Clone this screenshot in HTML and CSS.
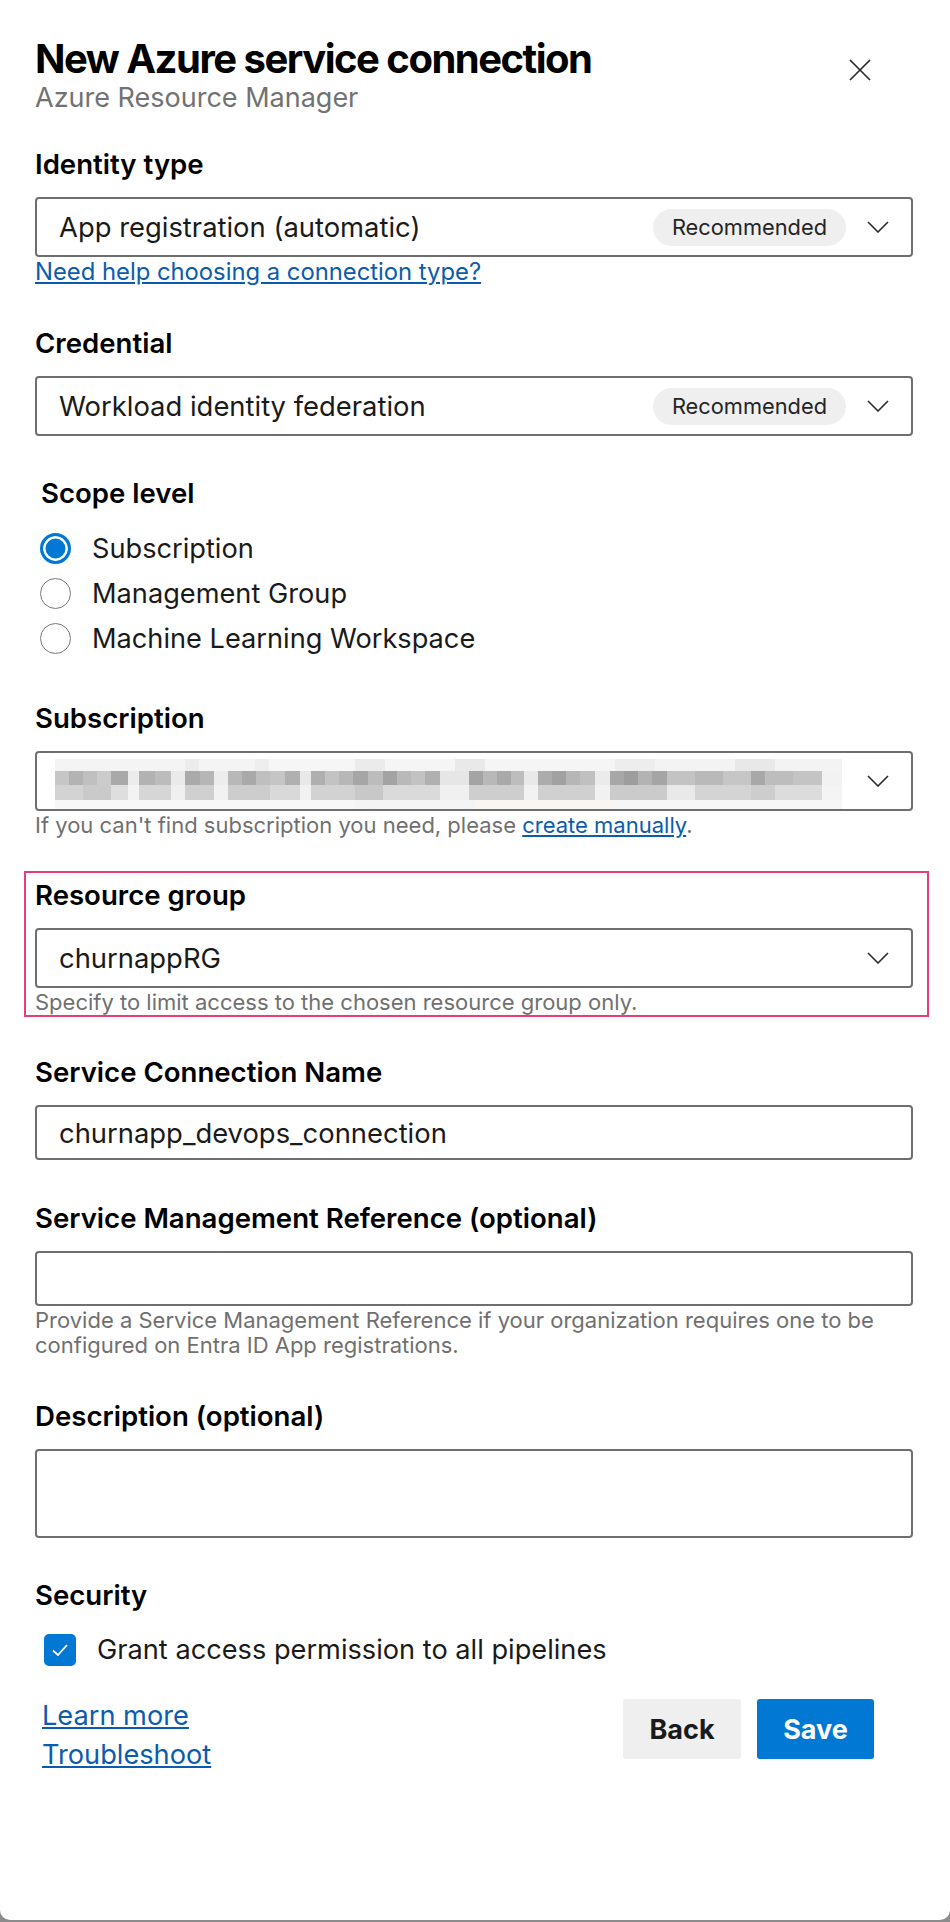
FILE: index.html
```html
<!DOCTYPE html>
<html lang="en">
<head>
<meta charset="utf-8">
<title>New Azure service connection</title>
<link rel="stylesheet" href="styles.css">
</head>
<body>
<div class="panel">
  <header class="header">
    <div class="titles">
      <h1 class="title">New Azure service connection</h1>
      <div class="subtitle">Azure Resource Manager</div>
    </div>
    <button class="close" aria-label="Close">
      <svg width="22" height="22" viewBox="0 0 22 22"><path d="M1 1 L21 21 M21 1 L1 21" stroke="#2b2b2b" stroke-width="1.7" fill="none"/></svg>
    </button>
  </header>

  <section class="section section--first">
    <div class="label">Identity type</div>
    <div class="select">
      <span class="value">App registration (automatic)</span>
      <span class="pill">Recommended</span>
      <svg class="chev" width="22" height="12" viewBox="0 0 22 12"><path d="M1 1 L11 11 L21 1" stroke="#2b2b2b" stroke-width="1.6" fill="none"/></svg>
    </div>
    <a class="help-link" href="#">Need help choosing a connection type?</a>
  </section>

  <section class="section">
    <div class="label">Credential</div>
    <div class="select">
      <span class="value">Workload identity federation</span>
      <span class="pill">Recommended</span>
      <svg class="chev" width="22" height="12" viewBox="0 0 22 12"><path d="M1 1 L11 11 L21 1" stroke="#2b2b2b" stroke-width="1.6" fill="none"/></svg>
    </div>
  </section>

  <section class="section">
    <div class="label label--scope">Scope level</div>
    <div class="radios">
      <div class="radio-row"><span class="radio radio--on"></span><span class="radio-text">Subscription</span></div>
      <div class="radio-row"><span class="radio"></span><span class="radio-text">Management Group</span></div>
      <div class="radio-row"><span class="radio"></span><span class="radio-text">Machine Learning Workspace</span></div>
    </div>
  </section>

  <section class="section">
    <div class="label">Subscription</div>
    <div class="select select--blurred">
      <div class="blur">
        <div class="blur-row blur-row--a"></div>
        <div class="blur-row blur-row--b"></div>
        <div class="blur-row blur-row--c"></div>
        <div class="blur-row blur-row--d"></div>
      </div>
      <svg class="chev" width="22" height="12" viewBox="0 0 22 12"><path d="M1 1 L11 11 L21 1" stroke="#2b2b2b" stroke-width="1.6" fill="none"/></svg>
    </div>
    <div class="helper">If you can't find subscription you need, please <a class="inline-link" href="#">create manually</a>.</div>
  </section>

  <section class="highlight">
    <div class="label">Resource group</div>
    <div class="select">
      <span class="value">churnappRG</span>
      <svg class="chev" width="22" height="12" viewBox="0 0 22 12"><path d="M1 1 L11 11 L21 1" stroke="#2b2b2b" stroke-width="1.6" fill="none"/></svg>
    </div>
    <div class="helper">Specify to limit access to the chosen resource group only.</div>
  </section>

  <section class="section section--after-highlight">
    <div class="label">Service Connection Name</div>
    <div class="input"><span class="value">churnapp_devops_connection</span></div>
  </section>

  <section class="section section--wide">
    <div class="label">Service Management Reference (optional)</div>
    <div class="input"></div>
    <div class="helper helper--multi">Provide a Service Management Reference if your organization requires one to be configured on Entra ID App registrations.</div>
  </section>

  <section class="section section--wide">
    <div class="label">Description (optional)</div>
    <div class="textarea"></div>
  </section>

  <section class="section">
    <div class="label">Security</div>
    <div class="check-row">
      <span class="checkbox"><svg width="20" height="16" viewBox="0 0 20 16"><path d="M3 8.5 L8 13 L17 3" stroke="#fff" stroke-width="1.8" fill="none"/></svg></span>
      <span class="check-text">Grant access permission to all pipelines</span>
    </div>
  </section>

  <footer class="footer">
    <div class="links">
      <a class="foot-link" href="#">Learn more</a>
      <a class="foot-link" href="#">Troubleshoot</a>
    </div>
    <div class="buttons">
      <button class="btn btn--back">Back</button>
      <button class="btn btn--save">Save</button>
    </div>
  </footer>
</div>
</body>
</html>
```

FILE: styles.css
```css
* { box-sizing: border-box; }
html, body { margin: 0; padding: 0; }
body {
  background: #8c8c8c;
  font-family: Inter, "Noto Sans", sans-serif;
  color: #1a1a1a;
}
.panel {
  width: 950px;
  min-height: 1920px;
  background: #fff;
  border-radius: 0 0 10px 10px;
  padding: 35px 37px 0 35px;
}
.header { display: flex; justify-content: space-between; align-items: flex-start; }
.title {
  margin: 0;
  font-size: 40px;
  line-height: 47px;
  font-weight: 700;
  letter-spacing: -1.5px;
  color: #000;
}
.subtitle { font-size: 27px; line-height: 32px; color: #727272; }
.close {
  margin: 13px 31px 0 0;
  width: 44px; height: 44px;
  border: 0; background: none; padding: 0;
  display: flex; align-items: center; justify-content: center;
}
.section { margin-top: 41px; }
.section--first { margin-top: 34px; }
.section--after-highlight { margin-top: 39px; }
.section--wide { margin-top: 42px; }
.label { font-size: 27.6px; line-height: 32px; font-weight: 600; color: #000; }
.label--scope { padding-left: 6px; }
.select, .input, .textarea {
  margin-top: 17px;
  border: 2px solid #6f6f6f;
  border-radius: 4px;
  display: flex;
  align-items: center;
}
.select { height: 60px; padding: 0 22px; }
.input { height: 55px; padding: 0 22px; }
.textarea { height: 89px; display: block; }
.value { font-size: 27.4px; color: #1a1a1a; }
.pill {
  margin-left: auto;
  height: 37px;
  line-height: 37px;
  padding: 0 19px;
  border-radius: 19px;
  background: #efefef;
  font-size: 21.8px;
  color: #242424;
}
.chev { margin-left: auto; flex: none; align-self: center; }
.pill + .chev { margin-left: 21px; }
.help-link {
  display: block;
  margin-top: 1px;
  font-size: 23.8px;
  line-height: 28px;
  color: #0b5cad;
  text-decoration: underline;
  width: max-content;
}
.radios { margin-top: 17px; }
.radio-row { height: 45px; display: flex; align-items: center; padding-left: 5px; gap: 21px; }
.radio {
  width: 31px; height: 31px;
  border-radius: 50%;
  border: 1.6px solid #7a7a7a;
  flex: none;
}
.radio--on {
  border: 3px solid #0078d4;
  background: #0078d4;
  box-shadow: inset 0 0 0 2.5px #fff;
}
.radio-text { font-size: 27.2px; color: #1a1a1a; }
.select--blurred { padding-left: 18px; align-items: stretch; }
.blur { width: 787px; margin-top: 6px; display: flex; flex-direction: column; }
.blur-row { width: 100%; }
.blur-row--a {
  height: 12px;
  background: linear-gradient(90deg, #f4f4f4 0 130px, #ececec 130px 144px, #f4f4f4 144px 200px, #eeeeee 200px 214px, #f6f6f6 214px 300px, #ebebeb 300px 330px, #f5f5f5 330px 400px, #e9e9e9 400px 430px, #f5f5f5 430px 560px, #ededed 560px 600px, #f3f3f3 600px 680px, #e8e8e8 680px 720px, #f3f3f3 720px 787px);
}
.blur-row--b {
  height: 14px;
  background: linear-gradient(90deg,
    #c6c6c6 0 14px, #b3b3b3 14px 28px, #c0c0c0 28px 42px, #cbcbcb 42px 56px, #a9a9a9 56px 73px,
    #ececec 73px 84px,
    #b2b2b2 84px 100px, #bcbcbc 100px 116px,
    #eaeaea 116px 130px,
    #aaaaaa 130px 145px, #b6b6b6 145px 159px,
    #ededed 159px 173px,
    #b8b8b8 173px 187px, #a9a9a9 187px 201px, #bfbfbf 201px 215px, #c5c5c5 215px 230px, #b0b0b0 230px 245px,
    #e8e8e8 245px 256px,
    #afafaf 256px 270px, #c3c3c3 270px 284px, #b7b7b7 284px 298px, #a6a6a6 298px 313px, #bcbcbc 313px 328px, #a3a3a3 328px 342px, #b9b9b9 342px 356px, #c2c2c2 356px 370px, #b0b0b0 370px 385px,
    #e6e6e6 385px 414px,
    #a4a4a4 414px 428px, #b8b8b8 428px 442px, #a9a9a9 442px 456px, #bdbdbd 456px 469px,
    #e9e9e9 469px 483px,
    #acacac 483px 497px, #a1a1a1 497px 511px, #b6b6b6 511px 525px, #c0c0c0 525px 540px,
    #ebebeb 540px 555px,
    #a7a7a7 555px 569px, #9d9d9d 569px 583px, #b3b3b3 583px 597px, #a5a5a5 597px 612px,
    #c3c3c3 612px 640px, #b9b9b9 640px 668px, #c6c6c6 668px 696px, #a8a8a8 696px 710px, #bdbdbd 710px 738px, #c4c4c4 738px 767px,
    #f2f2f2 767px 787px);
}
.blur-row--c {
  height: 15px;
  background: linear-gradient(90deg,
    #d3d3d3 0 28px, #cacaca 28px 56px, #dedede 56px 73px,
    #f3f3f3 73px 84px,
    #d6d6d6 84px 116px,
    #f0f0f0 116px 130px,
    #d0d0d0 130px 159px,
    #f2f2f2 159px 173px,
    #cdcdcd 173px 215px, #d9d9d9 215px 245px,
    #f1f1f1 245px 256px,
    #d2d2d2 256px 300px, #c8c8c8 300px 328px, #dadada 328px 385px,
    #f0f0f0 385px 414px,
    #cecece 414px 469px,
    #f2f2f2 469px 483px,
    #d0d0d0 483px 540px,
    #f1f1f1 540px 555px,
    #cbcbcb 555px 612px,
    #e9e9e9 612px 640px, #d4d4d4 640px 696px, #cdcdcd 696px 720px, #dcdcdc 720px 767px,
    #f4f4f4 767px 787px);
}
.blur-row--d {
  height: 9px;
  background: linear-gradient(90deg, #f7f7f7 0 300px, #f4f4f4 300px 420px, #f8f5f3 420px 560px, #f6f6f6 560px 787px);
}
.helper { margin-top: 1px; font-size: 22px; line-height: 26px; color: #707070; }
.helper--multi { margin-top: 2px; line-height: 25px; }
.inline-link { color: #0b5cad; text-decoration: underline; }
.highlight {
  margin: 33px -16px 0 -11px;
  padding: 6px 14px 0 9px;
  border: 2px solid #ec3c76;
}
.check-row { margin-top: 22px; display: flex; align-items: center; gap: 21px; padding-left: 9px; }
.checkbox {
  width: 32px; height: 32px;
  border-radius: 5px;
  background: #0078d4;
  display: flex; align-items: center; justify-content: center;
  flex: none;
}
.check-text { font-size: 27.2px; color: #1a1a1a; }
.footer { margin-top: 33px; display: flex; justify-content: space-between; align-items: flex-start; }
.links { display: flex; flex-direction: column; gap: 7px; padding: 1px 0 0 7px; }
.foot-link { font-size: 27.2px; line-height: 32px; color: #0b5cad; text-decoration: underline; width: max-content; }
.buttons { display: flex; gap: 16px; margin-right: 39px; }
.btn {
  height: 60px;
  border: 0;
  border-radius: 3px;
  font-family: inherit;
  font-size: 27px;
  font-weight: 700;
}
.btn--back { width: 118px; background: #efefef; color: #1a1a1a; }
.btn--save { width: 117px; background: #0078d4; color: #fff; }
```
